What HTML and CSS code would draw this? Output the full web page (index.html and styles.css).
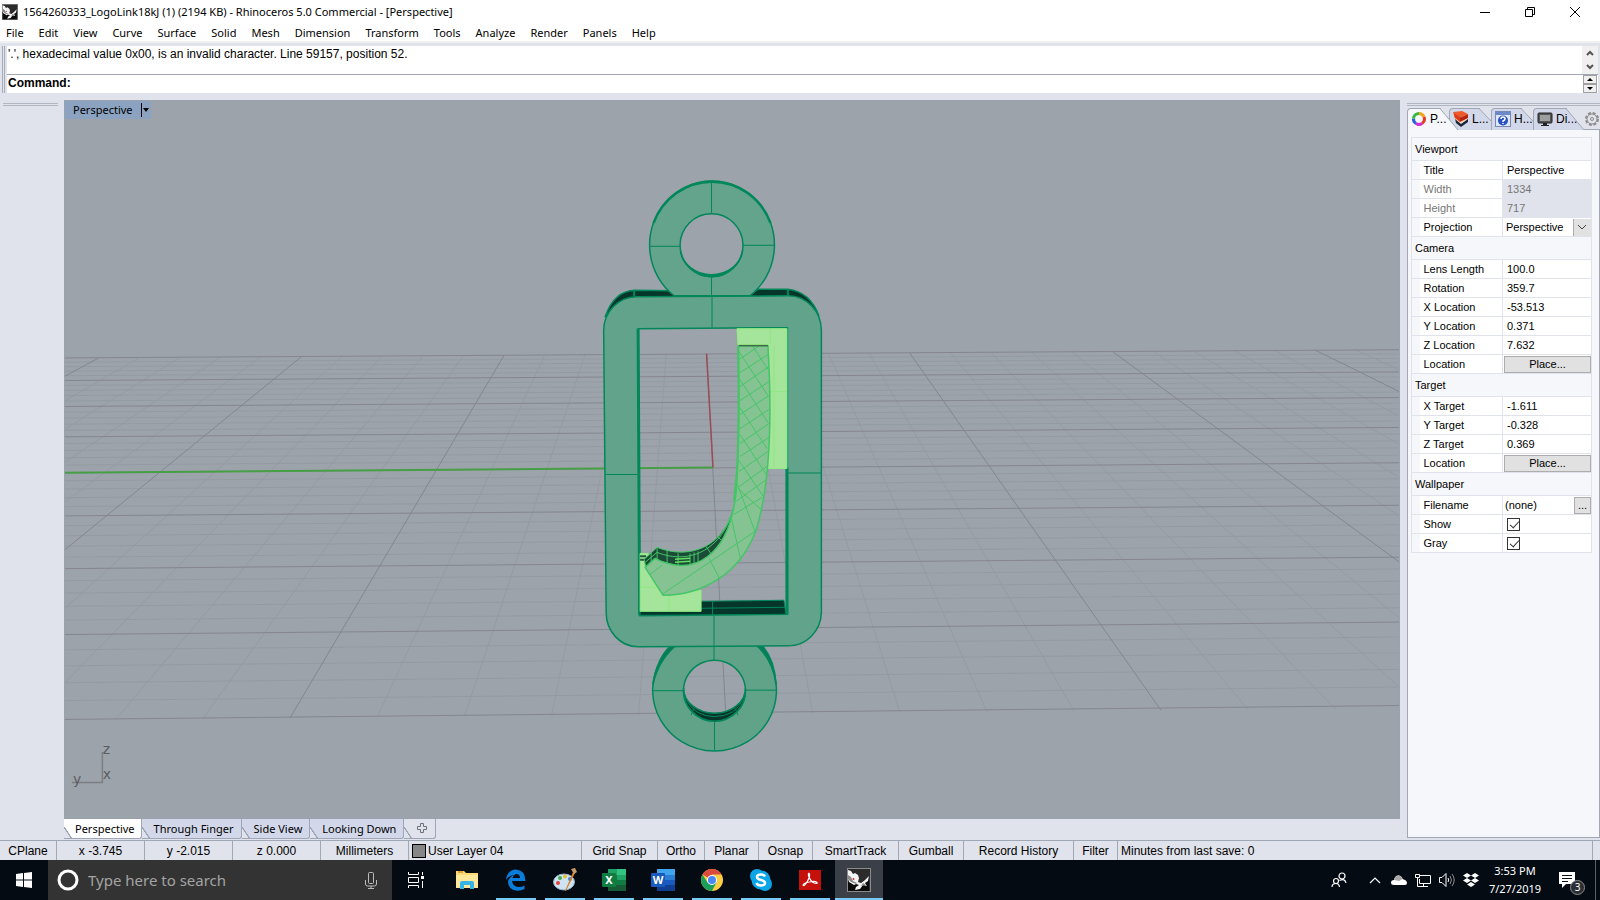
FILE: index.html
```html
<!DOCTYPE html>
<html lang="en">
<head>
<meta charset="utf-8">
<title>1564260333_LogoLink18kJ - Rhinoceros 5.0</title>
<link rel="stylesheet" href="styles.css">
</head>
<body>
<svg class="defs" width="0" height="0" aria-hidden="true">
  <symbol id="rhino" viewBox="0 0 24 24">
    <rect width="24" height="24" fill="#8b8b8b"/>
    <rect x="1" y="1" width="22" height="22" fill="#2b2b2b"/>
    <path d="M1 12h8l4 3 9-6v14H1z" fill="#0b0b0b"/>
    <path d="M1 2l3 1 2 3 2-1 3 2 1 3-1 4 3 1 4-3 4-4-1 5-3 2 2 3-4-1-3 4-5 1 1-3 3-2-3-1-2 1-5-3-1-3z" fill="#f4f4f4"/>
    <path d="M1 7l3 2 2 4 4 2-1 1-5-2-3-3zM14 18l2-3 3 2z" fill="#8a8a8a"/>
    <circle cx="6.500" cy="11" r="1" fill="#c33"/>
  </symbol>
</svg>
<div class="app">
  <header class="titlebar">
    <svg class="app-icon"><use href="#rhino"/></svg>
    <h1 class="title">1564260333_LogoLink18kJ (1) (2194 KB) - Rhinoceros 5.0 Commercial - [Perspective]</h1>
    <div class="window-buttons">
      <button aria-label="Minimize"><svg width="12" height="12"><path d="M1 6.500h10" stroke="#000"/></svg></button>
      <button aria-label="Restore"><svg width="12" height="12" fill="none" stroke="#000"><path d="M1.500 3.500h7v7h-7zM3.500 3.500v-2h7v7h-2"/></svg></button>
      <button aria-label="Close"><svg width="12" height="12"><path d="M1 1l10 10M11 1L1 11" stroke="#000"/></svg></button>
    </div>
  </header>
  <nav class="menubar">
    <button>File</button><button>Edit</button><button>View</button><button>Curve</button><button>Surface</button><button>Solid</button><button>Mesh</button><button>Dimension</button><button>Transform</button><button>Tools</button><button>Analyze</button><button>Render</button><button>Panels</button><button>Help</button>
  </nav>
  <section class="command">
    <div class="history">
      <p>'.', hexadecimal value 0x00, is an invalid character. Line 59157, position 52.</p>
      <div class="scroller">
        <button aria-label="Scroll up"><svg width="8" height="6"><path d="M1 5l3-3 3 3" class="chev"/></svg></button>
        <button aria-label="Scroll down"><svg width="8" height="6"><path d="M1 1l3 3 3-3" class="chev"/></svg></button>
      </div>
    </div>
    <div class="prompt">
      <label for="cmd">Command:</label><input id="cmd" type="text">
      <div class="spinner">
        <button aria-label="Previous"><svg width="6" height="3"><path d="M0 3l3-3 3 3z"/></svg></button>
        <button aria-label="Next"><svg width="6" height="3"><path d="M0 0l3 3 3-3z"/></svg></button>
      </div>
    </div>
  </section>
  <main class="workspace">
    <aside class="toolstrip"><div class="grip"></div></aside>
    <section class="center">
      <div class="viewport">
        <svg class="scene" viewBox="64 100 1336 718" preserveAspectRatio="xMidYMid slice">
          <path id="grid-minor" fill="none" stroke="#949ba2" stroke-width="1"/>
          <path id="grid-major" fill="none" stroke="#85868f" stroke-width="1"/>
          <path d="M64 472.300L713 467" stroke="#479f45" stroke-width="2"/>
          <path d="M706.500 353L713 467" stroke="#984e52" stroke-width="1.500"/>
          <g stroke="#00875a" stroke-width="1.500" stroke-linejoin="round">
            <path fill-rule="evenodd" fill="#60a389" d="M714.500 629A62 61 0 1 0 714.600 629zM714.500 660A31 30.500 0 1 1 714.400 660z"/>
            <path fill="#0a7a55" d="M653 684Q657 658 670 646L675 646Q658 661 653 684zM776 684Q773 660 758 646L763 646Q775 661 776 684z"/>
            <path fill="#06352a" d="M683.500 688A31 25 0 0 0 745.500 688A31 31 0 0 1 714.500 721A31 31 0 0 1 683.500 688z"/>
            <path fill="none" d="M686 699Q694 716 714.500 716.500Q736 716 743 699M694 708l-3 7M735 708l3 7" stroke-width="1"/>
            <path fill="none" stroke-width="1" d="M714.500 721V750M653 690.500H683M746 690H776"/>
            <path fill="#06352a" d="M605 316Q614 290 635 289.500L672 290L676 296L635 297Q618 299 605 316zM748 296L758 288.500L788 288.500Q810 291 819 315Q808 298 790 296z"/>
            <path d="M634 290V296M788 289V295" stroke-width="2"/>
            <path fill="#64a48c" d="M674 295A62.500 64 0 1 1 750 295z"/>
            <path d="M653.500 222A62.500 63.500 0 0 1 770.500 222" fill="none" stroke-width="2.500"/>
            <circle cx="711.500" cy="244.500" r="31.500" fill="#9da3ab"/>
            <path d="M680.500 250A31.500 31.500 0 0 0 742.500 250A31.500 27 0 0 1 711.500 274A31.500 27 0 0 1 680.500 250z" fill="#00875a"/>
            <path fill="none" stroke-width="1" d="M711.500 182V212M711.500 277V296M649 245.500H680M743 244.500H774"/>
            <path fill-rule="evenodd" fill="#62a38b" d="M603.500 330A33 34 0 0 1 636 296L788 295A33 35 0 0 1 821.500 330L821.500 612A33 34 0 0 1 788 645.500L638 646.500A32 34 0 0 1 606 612zM638 328L787.500 327L787.500 614L639.500 615.500z"/>
            <path fill="none" stroke-width="3" d="M638 328L639.500 615"/>
            <path fill="none" stroke-width="3" d="M787 467V614"/>
            <path fill="none" stroke-width="1" d="M712 296V327M714 615V660M605 474H638M788 472.500H821"/>
            <path fill="#06352a" stroke-width="1" d="M701 601L784 600L786 614L640 615V611H701z"/>
            <path fill="none" stroke-width="1" d="M701 608L785 607M712.500 601V614"/>
          </g>
          <path fill="#a5e49b" stroke="#93ec83" d="M737 328H787V468H768V344H738zM640 553H648V567L663 595L701 590V611H640z"/>
          <path fill="none" stroke="#8fe97f" d="M770.500 328V344M774 345V467M770 391H787M669 595V611M640 587H656"/>
          <path d="M640 556H646M640 559.500H646" stroke="#23583a" stroke-width="2"/>
          <g stroke="#44c567" stroke-linejoin="round">
            <path fill="#1b4a36" d="M644 559L657 547C690 560 727 547 735 500L738 480V500Q732 530 715 552Q698 566 680 566L657 560L646 568z"/>
            <path fill="none" d="M645 562L657 552C690 565 725 550 736 500M657 547V560M667 550V564M678 553V566M690 553V566M694 552V565M698 551V564M706 546L712 555M717 536L724 542M728 518L733 522M651 552V564"/>
            <path fill="none" stroke="#67df62" stroke-width="1.500" d="M675 559L690 558M675 562L690 561"/>
            <path fill="#86c392" stroke-width="1.500" d="M738.500 345H768C773 430 768 492 756 530C740 573 703 595 663 595L645 567L655 558C690 577 733 560 737 480Q739 440 738.500 345z"/>
            <path fill="none" stroke-width="2" d="M738 345Q740 420 737 470L734 500"/>
            <path fill="none" d="M739 359L758 346M740 372L768 354M740 386L769 366M740 400L769 381M740 414L769 395M740 428L769 409M740 443L769 423M740 456L769 437M739 471L768 451M738 487L767 466M736 501L765 480M734 514L762 497M650 574L662 565M662 594L755 531M739 351L768 395M753 346L768 369M740 379L768 422M740 407L767 448M740 434L767 475M739 460L764 497M737 483L755 531M731 516L741 561M709 558L720 579M738 488L762 510"/>
          </g>
          <path d="M739 345H768" stroke="#3f6d45" stroke-width="1.500"/>
          <g class="axes">
            <path d="M71 782.500H101.500V752" fill="none" stroke="#7b7e82" stroke-width="1.500"/>
            <text x="102" y="754">z</text><text x="102" y="779">x</text><text x="72" y="784">y</text>
          </g>
        </svg>
        <button class="view-title"><span>Perspective</span><svg width="8" height="14"><path d="M.5 0v14" stroke="#000"/><path d="M2 5h6l-3 4z"/></svg></button>
      </div>
      <div class="view-tabs">
        <button class="vtab active">Perspective</button><button class="vtab">Through Finger</button><button class="vtab">Side View</button><button class="vtab">Looking Down</button>
        <button class="vtab plus" aria-label="New viewport"><svg width="10" height="10"><path d="M3.500 .5h3v3h3v3h-3v3h-3v-3h-3v-3h3z" fill="none" stroke="#6d7078"/></svg></button>
      </div>
    </section>
    <aside class="panel">
      <div class="grip"></div>
      <div class="ptabs">
        <button class="ptab active"><svg width="16" height="16" fill="none" stroke-width="3"><path d="M8 2.500a5.500 5.500 0 0 1 5 3.500" stroke="#f2a51c"/><path d="M13 6a5.500 5.500 0 0 1-2 6.500" stroke="#e33b25"/><path d="M11 12.500a5.500 5.500 0 0 1-6 0" stroke="#d32ad1"/><path d="M5 12.500a5.500 5.500 0 0 1-2.500-5" stroke="#2b62da"/><path d="M2.500 7.500a5.500 5.500 0 0 1 5.500-5" stroke="#35b947"/></svg><span>P...</span><svg class="slope" width="18" height="22"><path d="M0 .5L18 22H0z" fill="#f6f7fa"/><path d="M0 .5L18 22" stroke="#a0a8b5"/></svg></button>
        <button class="ptab"><svg width="16" height="16"><path d="M1 3l7 3v10l-5-4z" fill="#17263c"/><path d="M8 11l7-4v4l-7 5z" fill="#17263c"/><path d="M1 3l7 6 7-3v2l-7 5-6-5z" fill="#f7d9bd"/><path d="M0 1l9-1 6 3-8 4z" fill="#ef5a2a"/><path d="M0 1l7 6v4L2 7z" fill="#e23b13"/><path d="M7 7l8-4v4l-8 4z" fill="#b5240f"/></svg><span>L...</span><svg class="slope" width="12" height="22"><path d="M0 .5L12 13V22H0z" fill="#d2d8ea"/><path d="M0 .5L12 13" stroke="#a0a8b5"/></svg></button>
        <button class="ptab"><svg width="16" height="16"><rect x=".5" y=".5" width="15" height="15" fill="#dfe7fa" stroke="#7488b5"/><path d="M1 1h14v3H1z" fill="#6c88c9"/><circle cx="8" cy="9.500" r="5" fill="#2951c4"/><path d="M6 8q0-2 2-2t2 2q0 1-2 2v1M8 12v1" fill="none" stroke="#fff" stroke-width="1.500"/></svg><span>H...</span><svg class="slope" width="12" height="22"><path d="M0 .5L12 13V22H0z" fill="#d2d8ea"/><path d="M0 .5L12 13" stroke="#a0a8b5"/></svg></button>
        <button class="ptab"><svg width="16" height="16"><rect x="1" y="2" width="14" height="10" rx="1" fill="#555" stroke="#222"/><rect x="3" y="4" width="10" height="6" fill="#9b9fa0"/><path d="M6 12h4v2h2v1H4v-1h2z" fill="#222"/></svg><span>Di...</span><svg class="slope" width="18" height="22"><path d="M0 .5L18 22H0z" fill="#d2d8ea"/><path d="M0 .5L18 22" stroke="#a0a8b5"/></svg></button>
        <button class="gear" aria-label="Panel options"><svg width="14" height="14" fill="none" stroke="#8c8c8c"><circle cx="7" cy="7" r="6" stroke-width="2" stroke-dasharray="3 1.700"/><circle cx="7" cy="7" r="5"/><circle cx="7" cy="7" r="1.500"/></svg></button>
      </div>
      <div class="pbody">
        <table class="props">
          <colgroup><col class="c1"><col class="c2"><col></colgroup>
          <tr class="group"><th colspan="3">Viewport</th></tr>
          <tr><td class="gut"></td><th>Title</th><td>Perspective</td></tr>
          <tr class="off"><td class="gut"></td><th>Width</th><td>1334</td></tr>
          <tr class="off"><td class="gut"></td><th>Height</th><td>717</td></tr>
          <tr><td class="gut"></td><th><label for="proj">Projection</label></th><td class="ctl"><div class="selwrap"><select id="proj"><option>Perspective</option></select><svg width="10" height="6"><path d="M1 1l4 4 4-4" fill="none" stroke="#444"/></svg></div></td></tr>
          <tr class="group"><th colspan="3">Camera</th></tr>
          <tr><td class="gut"></td><th>Lens Length</th><td>100.0</td></tr>
          <tr><td class="gut"></td><th>Rotation</th><td>359.7</td></tr>
          <tr><td class="gut"></td><th>X Location</th><td>-53.513</td></tr>
          <tr><td class="gut"></td><th>Y Location</th><td>0.371</td></tr>
          <tr><td class="gut"></td><th>Z Location</th><td>7.632</td></tr>
          <tr><td class="gut"></td><th>Location</th><td class="ctl"><button class="place">Place...</button></td></tr>
          <tr class="group"><th colspan="3">Target</th></tr>
          <tr><td class="gut"></td><th>X Target</th><td>-1.611</td></tr>
          <tr><td class="gut"></td><th>Y Target</th><td>-0.328</td></tr>
          <tr><td class="gut"></td><th>Z Target</th><td>0.369</td></tr>
          <tr><td class="gut"></td><th>Location</th><td class="ctl"><button class="place">Place...</button></td></tr>
          <tr class="group"><th colspan="3">Wallpaper</th></tr>
          <tr><td class="gut"></td><th>Filename</th><td class="ctl"><div class="file"><span>(none)</span><button class="place">...</button></div></td></tr>
          <tr><td class="gut"></td><th><label for="show">Show</label></th><td><input id="show" class="tick" type="checkbox" checked></td></tr>
          <tr><td class="gut"></td><th><label for="gray">Gray</label></th><td><input id="gray" class="tick" type="checkbox" checked></td></tr>
        </table>
      </div>
    </aside>
  </main>
  <footer class="status">
    <button class="w56">CPlane</button><span class="w88">x -3.745</span><span class="w88">y -2.015</span><span class="w88">z 0.000</span><button class="w88">Millimeters</button>
    <button class="layer"><i></i>User Layer 04</button>
    <button class="w76">Grid Snap</button><button class="w47">Ortho</button><button class="w54">Planar</button><button class="w54">Osnap</button><button class="w86">SmartTrack</button><button class="w65">Gumball</button><button class="w110">Record History</button><button class="w44">Filter</button>
    <span class="message">Minutes from last save: 0</span>
  </footer>
  <nav class="taskbar">
    <button class="start" aria-label="Start"><svg width="16" height="16" fill="#fff"><path d="M0 2l7-1v6.500H0zM8 1l8-1v7.500H8zM0 8.500h7V15l-7-1zM8 8.500h8V16l-8-1z"/></svg></button>
    <div class="search">
      <svg width="22" height="22"><circle cx="11" cy="11" r="9" fill="none" stroke="#fff" stroke-width="3"/></svg>
      <input type="text" aria-label="Search" placeholder="Type here to search">
      <svg width="12" height="17" fill="none" stroke="#bbb"><rect x="3.500" y=".5" width="5" height="11" rx="1"/><path d="M.5 8v4q0 2 2 2h7q2 0 2-2V8M6 14v2.500M3 16.500h6"/></svg>
    </div>
    <div class="apps">
      <button class="tb view" aria-label="Task View"><svg width="16" height="16" fill="none" stroke="#fff"><path d="M.5 0v2.500h10V0M.5 5.500h10v5H.5zM.5 16v-2.500h10V16M14.500 0v3M14.500 9v7"/><rect x="13" y="4" width="3" height="3" fill="#fff" stroke="none"/></svg></button>
      <button class="tb" aria-label="File Explorer"><svg width="22" height="20"><path d="M0 1h8l2 2h12v15H0z" fill="#fbda76"/><path d="M0 5h22v13H0z" fill="#ffe79b"/><path d="M2 1h5v2H2z" fill="#e9a23b"/><path d="M4 19v-6q0-2 2-2h10q2 0 2 2v6h-4v-4H8v4z" fill="#35b4e8"/></svg></button>
      <button class="tb run" aria-label="Edge"><svg width="22" height="22"><path d="M1 11Q2 1 11 0.500Q20 1 20.500 12H7q1 6 7 6 3 0 5.500-1.500V20q-3 1.800-7 1.800Q3 21 3 12.500 4 8 9 6 4 6.500 1 11zM7.500 9H15q0-4-4-4-3 1-3.500 4z" fill="#0a7ddb"/></svg></button>
      <button class="tb run" aria-label="Paint"><svg width="24" height="24"><ellipse cx="11" cy="14" rx="10.500" ry="8" fill="#cfe3f2" stroke="#8fb2cf"/><circle cx="5" cy="15" r="2" fill="#e0453d"/><circle cx="7" cy="10" r="2" fill="#43ab4d"/><circle cx="12" cy="8.500" r="2" fill="#e7bd3c"/><circle cx="17" cy="11" r="2" fill="#3f86d4"/><path d="M20 4l2 1-9 18h-1z" fill="#d98327"/><path d="M18 1l4-1 2 4-3 2z" fill="#c79b6a"/></svg></button>
      <button class="tb run" aria-label="Excel"><svg width="24" height="22"><path d="M6 0h9v6H6z" fill="#21a366"/><path d="M15 0h9v6h-9z" fill="#33c481"/><path d="M6 6h9v5H6z" fill="#107c41"/><path d="M15 6h9v5h-9z" fill="#21a366"/><path d="M6 11h18v5H6z" fill="#107c41"/><path d="M6 16h18v6H6z" fill="#185c37"/><rect y="4" width="14" height="14" rx="1" fill="#107c41"/><text x="7" y="15" class="glyph">X</text></svg></button>
      <button class="tb run" aria-label="Word"><svg width="24" height="22"><path d="M6 0h18v6H6z" fill="#41a5ee"/><path d="M6 6h18v5H6z" fill="#2b7cd3"/><path d="M6 11h18v5H6z" fill="#185abd"/><path d="M6 16h18v6H6z" fill="#103f91"/><rect y="4" width="14" height="14" rx="1" fill="#185abd"/><text x="7" y="15" class="glyph">W</text></svg></button>
      <button class="tb run" aria-label="Chrome"><svg width="22" height="22"><circle cx="11" cy="11" r="11" fill="#ffcd42"/><path d="M11 11L1.500 5.500A11 11 0 0 1 20.500 5.500H11z" fill="#dc4a3d"/><path d="M1.500 5.500A11 11 0 0 0 11 22L15.500 13.500 6.500 13.500z" fill="#1b9e5a"/><circle cx="11" cy="11" r="5" fill="#fff"/><circle cx="11" cy="11" r="4" fill="#4788f4"/></svg></button>
      <button class="tb run" aria-label="Skype"><svg width="22" height="22" fill="#0ca6e8"><circle cx="7" cy="7" r="7"/><circle cx="15" cy="15" r="7"/><circle cx="11" cy="11" r="9.500"/><path d="M15 7.500Q14 5.500 11 5.500 7 5.500 7 8q0 2 4 3t4 3q0 2.500-4 2.500-3.500 0-4.500-2.500" fill="none" stroke="#fff" stroke-width="2.500"/></svg></button>
      <button class="tb run" aria-label="Acrobat"><svg width="22" height="20"><rect width="22" height="20" fill="#c5100c"/><path d="M4 15q1 2 4-3 3-5 2.500-8-1.500-2-1 1.500 2 6 5.500 7.500 4 1 3-.5-2-2-8-.5-5 1-6 3z" fill="none" stroke="#fff" stroke-width="1.200"/></svg></button>
      <button class="tb run current" aria-label="Rhinoceros"><svg width="24" height="24"><use href="#rhino"/></svg></button>
    </div>
    <div class="tray">
      <button class="people" aria-label="People"><svg width="16" height="16" fill="none" stroke="#fff" stroke-width="1.200"><circle cx="11" cy="4" r="3"/><circle cx="5" cy="9" r="2.500"/><path d="M1 15q0-3.500 4-3.500 3 0 3.500 3.500M8.500 8.500Q14 6 15 11"/></svg></button>
      <button aria-label="Show hidden icons"><svg width="12" height="8"><path d="M1 7l5-5 5 5" fill="none" stroke="#fff" stroke-width="1.200"/></svg></button>
      <button aria-label="OneDrive"><svg width="16" height="11"><path d="M3 10Q0 10 0 7.500T3 5Q4 0 8 .5q3 .5 3.500 3.500Q16 5 16 8q0 2-2 2z" fill="#fff"/><path d="M3 5Q4 0 8 .5q3 .5 3.500 3.500L8 6z" fill="#aaa"/></svg></button>
      <button aria-label="Network"><svg width="16" height="14" fill="none" stroke="#fff"><path d="M5 2.500h10.500v8H4.500V6M8.500 11v2.500M5 13.500h8M2.500 5v8.500H5M.5 1.500h4v3h-4z"/></svg></button>
      <button aria-label="Volume"><svg width="16" height="14" fill="none" stroke="#fff"><path d="M.5 4.500H3l4-4v13l-4-4H.5z"/><path d="M9 5q1.500 2 0 4"/><path d="M11 3q3 4 0 8M13 1q4.500 6 0 12" stroke="#8b8d91"/></svg></button>
      <button aria-label="Dropbox"><svg width="16" height="14" fill="#fff"><path d="M4 0l4 2.500L4 5 0 2.500zM12 0l4 2.500L12 5 8 2.500zM4 5l4 2.500L4 10 0 7.500zM12 5l4 2.500-4 2.500-4-2.500zM8 9l4 2.500L8 14l-4-2.500z"/></svg></button>
      <div class="clock"><time>3:53 PM</time><time>7/27/2019</time></div>
      <button class="notes" aria-label="Notifications"><svg width="16" height="16"><path d="M0 0h16v12H7l-4 4v-4H0z" fill="#fff"/><path d="M3 3.500h10M3 6.500h10M3 9.500h6" stroke="#0a0f16"/></svg><span class="badge">3</span></button>
      <div class="peek"></div>
    </div>
  </nav>
</div>
<script src="grid.js"></script>
</body>
</html>
```
FILE: styles.css
```css
* { box-sizing: border-box; }
body { margin: 0; background: #e0e3eb; color: #000; font: 12px/16px "Liberation Sans", Arial, sans-serif; }
button { border: 0; padding: 0; margin: 0; background: none; color: inherit; font: inherit; }
button, label, span, p { white-space: nowrap; }
p, h1 { margin: 0; }
svg { flex: none; }
.defs { position: absolute; }
.app { height: 100vh; display: flex; flex-direction: column; overflow: hidden; }

.titlebar { flex: none; height: 23px; display: flex; align-items: center; background: #fff; padding-left: 2px; }
.app-icon { width: 16px; height: 16px; }
.title { margin-left: 5px; flex: 1; font: 11px/16px "Noto Sans", sans-serif; white-space: nowrap; }
.window-buttons { display: flex; margin-right: 3px; }
.window-buttons button { width: 45px; height: 21px; display: flex; align-items: center; justify-content: center; }

.menubar { flex: none; height: 20px; display: flex; gap: 15px; padding: 0 6px; background: #fff; border-bottom: 2px solid #f0f0f0; font: 11px/19px "Noto Sans", sans-serif; }

.command { flex: none; margin: 3px 2px 7px 2px; padding-left: 2px; border-left: 3px double #a6acb9; height: 47px; display: flex; flex-direction: column; }
.history { height: 29px; background: #fff; display: flex; justify-content: space-between; border-bottom: 1px solid #a0a8b5; }
.history p, .prompt label { padding-left: 1px; }
.scroller, .spinner { display: flex; flex-direction: column; width: 16px; background: #f0f0f0; }
.scroller button, .spinner button { flex: 1; display: flex; align-items: center; justify-content: center; }
.chev { fill: none; stroke: #555; stroke-width: 2; }
.prompt { height: 18px; background: #fff; display: flex; font-weight: bold; }
.prompt input { flex: 1; border: 0; outline: 0; background: none; font: inherit; }
.spinner { width: 14px; margin-right: 1px; }
.spinner button { border: 1px solid #a0a0a0; }

.workspace { flex: 1; min-height: 0; display: flex; }
.toolstrip { flex: none; width: 64px; padding: 3px 6px 0 3px; }
.grip { flex: none; height: 3px; border-top: 1px solid #b1b6c3; border-bottom: 1px solid #b1b6c3; }
.center { flex: 1; min-width: 0; display: flex; flex-direction: column; }
.viewport { flex: 1; min-height: 0; position: relative; background: #9da3ab; border: 1px solid #9aa2b0; }
.scene { display: block; width: 100%; height: 100%; }
.axes { font: 14px "DejaVu Sans", sans-serif; fill: #5b5d61; }
.view-title { position: absolute; left: 0; top: 0; height: 18px; padding: 0 2px 0 8px; display: flex; align-items: center; gap: 8px; background: #8ba3c1; font: 11px/18px "Noto Sans", sans-serif; }

.view-tabs { flex: none; height: 21px; display: flex; }
.vtab { height: 20px; padding: 0 7px 0 12px; background: linear-gradient(to top right, #e0e3eb 44%, #9fa6b8 46% 54%, transparent 56%) left bottom / 8px 12px no-repeat #d2d8ea; background-origin: border-box; border-right: 1px solid #9fa6b8; border-bottom: 1px solid #9fa6b8; border-radius: 0 0 3px 0; font: 11px/20px "Noto Sans", sans-serif; }
.vtab.active { padding: 0 6px 0 11px; background-color: #fff; }
.vtab.plus { background-color: #e0e3eb; padding: 0 8px 0 13px; }

.panel { flex: none; width: 200px; padding: 3px 0 2px 7px; display: flex; flex-direction: column; }
.ptabs { flex: none; height: 22px; margin-top: 2px; display: flex; }
.ptab { flex: none; width: 42px; display: flex; align-items: center; position: relative; }
.ptab::before { content: ""; position: absolute; inset: 0 11px 0 0; background: #d2d8ea; border-left: 1px solid #a0a8b5; border-top: 1px solid #a0a8b5; border-radius: 4px 0 0 0; }
.ptab > svg:first-child { margin: 0 3px 0 4px; position: relative; }
.ptab span { position: relative; z-index: 1; width: 0; line-height: 18px; }
.ptab .slope { position: relative; margin-left: auto; }
.ptab:nth-child(4) { width: 51px; }
.ptab:nth-child(4)::before { right: 17px; }
.ptab.active { z-index: 1; }
.ptab.active::before { background: #f6f7fa; right: 8px; }
.ptab.active .slope { margin-right: -9px; }
.gear { flex: 1; display: flex; align-items: center; justify-content: center; }
.pbody { flex: 1; min-height: 0; background: #f6f7fa; border: 1px solid #a0a8b5; padding: 7px 7px 0 3px; }
.ptabs + .pbody { margin-top: -1px; }
.props { width: 100%; table-layout: fixed; border-collapse: collapse; border: 1px solid #e0e3eb; font: 11px/14px "Liberation Sans", Arial, sans-serif; }
.c1 { width: 8px; }
.c2 { width: 83px; }
.props tr { height: 19px; background: #fff; }
.props .group { height: 23px; background: #f6f7fa; }
.props td, .props th { border: 1px solid #e0e3eb; padding: 0 0 0 4px; font-weight: normal; text-align: left; white-space: nowrap; }
.props .group th { padding-left: 3px; }
.props .gut { padding: 0; background: #f6f7fa; border-right: 0; }
.props .gut + th { border-left: 0; }
.props .off { color: #777; }
.props .off td:last-child { background: #e0e3eb; }
.props .ctl { padding: 0 0 0 1px; }
.place { display: block; width: 100%; height: 17px; background: #e1e1e1; border: 1px solid #adadad; }
.selwrap { display: flex; align-items: center; position: relative; }
.selwrap select { appearance: none; width: 100%; height: 17px; border: 0; padding: 0 18px 0 2px; font: inherit; background: linear-gradient(#adadad, #adadad) right 17px top / 1px 100% no-repeat, linear-gradient(#e1e1e1, #e1e1e1) right / 17px 100% no-repeat, #fff; }
.selwrap svg { position: absolute; right: 4px; }
.file { display: flex; justify-content: space-between; align-items: center; }
.file span { padding-left: 1px; }
.file .place { width: 17px; }
.tick { appearance: none; display: block; width: 13px; height: 13px; margin: 0; border: 1px solid #333; background: #fff; position: relative; }
.tick:checked::after { content: ""; position: absolute; left: 4px; top: 0; width: 4px; height: 8px; border: solid #333; border-width: 0 1px 1px 0; transform: rotate(42deg); }

.status { flex: none; height: 20px; display: flex; border-top: 1px solid #a0a8b5; line-height: 20px; }
.status > * { flex: none; text-align: center; border-right: 1px solid #a0a8b5; }
.w56 { width: 57px; } .w88 { width: 88px; } .w76 { width: 76px; } .w47 { width: 47px; } .w54 { width: 54px; }
.w86 { width: 86px; } .w65 { width: 65px; } .w110 { width: 110px; } .w44 { width: 44px; }
.status .layer { width: 173px; display: flex; align-items: center; gap: 2px; padding-left: 3px; }
.layer i { width: 14px; height: 14px; border: 1px solid #000; background: #868686; }
.status .message { flex: 1; margin-right: 7px; padding-left: 3px; text-align: left; }

.taskbar { flex: none; height: 40px; display: flex; background: #050b13; color: #fff; }
.start { width: 48px; display: flex; align-items: center; justify-content: center; }
.search { width: 344px; background: #333; display: flex; align-items: center; padding: 0 15px 0 9px; gap: 9px; }
.search input { flex: 1; min-width: 0; border: 0; outline: 0; padding: 0; background: none; color: #fff; font: 15px/20px "Noto Sans", sans-serif; }
.search input::placeholder { color: #a3a3a3; opacity: 1; }
.apps { display: flex; gap: 1px; flex: 1; }
.tb { width: 48px; display: flex; align-items: center; justify-content: center; }
.tb.view { margin-right: 2px; }
.run { background: linear-gradient(#76cbf7, #76cbf7) bottom / 40px 2px no-repeat; }
.run.current { background: linear-gradient(#76cbf7, #76cbf7) bottom / 48px 2px no-repeat, #3b3f47; }
.glyph { font: bold 11px "Noto Sans", sans-serif; fill: #fff; text-anchor: middle; }
.tray { display: flex; align-items: center; }
.tray button { width: 24px; height: 40px; display: flex; align-items: center; justify-content: center; }
.tray .people { width: 48px; }
.clock { width: 64px; display: flex; flex-direction: column; align-items: center; font: 11px/18px "Noto Sans", sans-serif; }
.tray .notes { width: 48px; padding-right: 8px; position: relative; }
.badge { position: absolute; left: 23px; top: 20px; width: 15px; height: 15px; border: 1px solid #8b8b8b; border-radius: 50%; background: #2b2e33; font: 10px/13px "Noto Sans", sans-serif; text-align: center; }
.peek { width: 5px; height: 40px; border-left: 1px solid #5b5f66; }
```
FILE: grid.js
```js
// Construction plane in perspective: 8 major cells, each split in 5.
const left = k => (472.3 - 3.82 * k) / (1 - 0.09116 * k);
const right = k => (462.3 - 3.55 * k) / (1 - 0.0912 * k);
let minor = "", major = "";
for (let i = -20; i <= 20; i++) {
  const k = i / 5;
  const row = `M64 ${left(k).toFixed(1)}L1400 ${right(k).toFixed(1)}`;
  const xt = 706.7 + 203 * k, xb = 725.7 + 436 * k;
  const yt = 358.1 - 0.0067 * xt, yb = 719.8 - 0.0082 * xb;
  const col = `M${xt.toFixed(1)} ${yt.toFixed(1)}L${xb.toFixed(1)} ${yb.toFixed(1)}`;
  if (i % 5 === 0) major += row + col; else minor += row + col;
}
document.getElementById("grid-minor").setAttribute("d", minor);
document.getElementById("grid-major").setAttribute("d", major);
```
